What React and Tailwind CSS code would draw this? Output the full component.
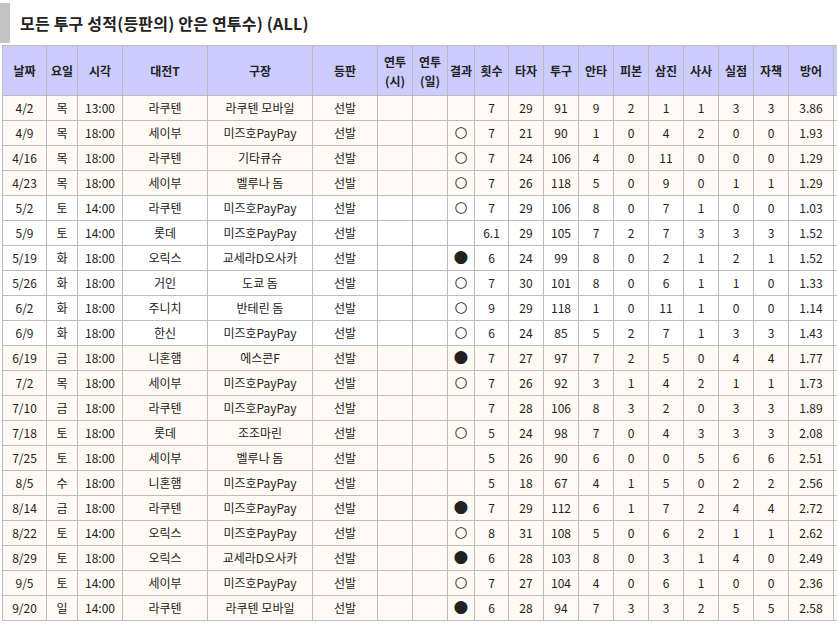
import React from "react";

const cols = [
  { key: "date", label: "날짜", w: 44 },
  { key: "dow", label: "요일", w: 31 },
  { key: "time", label: "시각", w: 45 },
  { key: "opp", label: "대전T", w: 85 },
  { key: "park", label: "구장", w: 105 },
  { key: "role", label: "등판", w: 65 },
  { key: "r1", label: ["연투", "(시)"], w: 35 },
  { key: "r2", label: ["연투", "(일)"], w: 35 },
  { key: "res", label: "결과", w: 27 },
  { key: "ip", label: "횟수", w: 34 },
  { key: "bf", label: "타자", w: 35 },
  { key: "np", label: "투구", w: 35 },
  { key: "h", label: "안타", w: 35 },
  { key: "hr", label: "피본", w: 35 },
  { key: "so", label: "삼진", w: 35 },
  { key: "bb", label: "사사", w: 35 },
  { key: "r", label: "실점", w: 35 },
  { key: "er", label: "자책", w: 35 },
  { key: "era", label: "방어", w: 45 },
  { key: "more", label: "", w: 50 },
];

const raw = [
  "4/2|목|13:00|라쿠텐|라쿠텐 모바일|선발||||7|29|91|9|2|1|1|3|3|3.86|",
  "4/9|목|18:00|세이부|미즈호PayPay|선발|||○|7|21|90|1|0|4|2|0|0|1.93|",
  "4/16|목|18:00|라쿠텐|기타큐슈|선발|||○|7|24|106|4|0|11|0|0|0|1.29|",
  "4/23|목|18:00|세이부|벨루나 돔|선발|||○|7|26|118|5|0|9|0|1|1|1.29|",
  "5/2|토|14:00|라쿠텐|미즈호PayPay|선발|||○|7|29|106|8|0|7|1|0|0|1.03|",
  "5/9|토|14:00|롯데|미즈호PayPay|선발||||6.1|29|105|7|2|7|3|3|3|1.52|",
  "5/19|화|18:00|오릭스|교세라D오사카|선발|||●|6|24|99|8|0|2|1|2|1|1.52|",
  "5/26|화|18:00|거인|도쿄 돔|선발|||○|7|30|101|8|0|6|1|1|0|1.33|",
  "6/2|화|18:00|주니치|반테린 돔|선발|||○|9|29|118|1|0|11|1|0|0|1.14|",
  "6/9|화|18:00|한신|미즈호PayPay|선발|||○|6|24|85|5|2|7|1|3|3|1.43|",
  "6/19|금|18:00|니혼햄|에스콘F|선발|||●|7|27|97|7|2|5|0|4|4|1.77|",
  "7/2|목|18:00|세이부|미즈호PayPay|선발|||○|7|26|92|3|1|4|2|1|1|1.73|",
  "7/10|금|18:00|라쿠텐|미즈호PayPay|선발||||7|28|106|8|3|2|0|3|3|1.89|",
  "7/18|토|18:00|롯데|조조마린|선발|||○|5|24|98|7|0|4|3|3|3|2.08|",
  "7/25|토|18:00|세이부|벨루나 돔|선발||||5|26|90|6|0|0|5|6|6|2.51|",
  "8/5|수|18:00|니혼햄|미즈호PayPay|선발||||5|18|67|4|1|5|0|2|2|2.56|",
  "8/14|금|18:00|라쿠텐|미즈호PayPay|선발|||●|7|29|112|6|1|7|2|4|4|2.72|",
  "8/22|토|14:00|오릭스|미즈호PayPay|선발|||○|8|31|108|5|0|6|2|1|1|2.62|",
  "8/29|토|18:00|오릭스|교세라D오사카|선발|||●|6|28|103|8|0|3|1|4|0|2.49|",
  "9/5|토|14:00|세이부|미즈호PayPay|선발|||○|7|27|104|4|0|6|1|0|0|2.36|",
  "9/20|일|14:00|라쿠텐|라쿠텐 모바일|선발|||●|6|28|94|7|3|3|2|5|5|2.58|",
];

const rows = raw.map((s) => s.split("|"));

// May rows and early June show white, the rest cream
const whiteRows = new Set([4, 5, 6, 7, 8, 9]);

function Mark({ v }) {
  if (!v) return null;
  return (
    <span
      className={`relative inline-block leading-none ${
        v === "●" ? "text-[17px] top-[-1px]" : "text-[15px] top-[-1px]"
      }`}
      style={{ fontFamily: '"DejaVu Sans", sans-serif' }}
    >
      {v}
    </span>
  );
}

export default function App() {
  return (
    <div
      className="w-[837px] h-[626px] overflow-hidden bg-white text-[#222]"
      style={{ fontFamily: '"Noto Sans CJK KR", "Noto Sans", sans-serif' }}
    >
      {/* Title */}
      <div className="flex items-stretch pt-[3px] h-[45px]">
        <div className="w-[10px] h-[40px] bg-[#c4c4c4]" />
        <h2 className="h-[40px] flex items-center pl-[10px] text-[16px] font-bold tracking-[0.2px]">
          모든 투구 성적(등판의) 안은 연투수) (ALL)
        </h2>
      </div>

      {/* Table */}
      <table className="ml-[2px] w-[881px] table-fixed border-collapse text-[12px]">
        <colgroup>
          {cols.map((c) => (
            <col key={c.key} style={{ width: c.w }} />
          ))}
        </colgroup>
        <thead>
          <tr className="h-[50px] bg-[#ccccff]">
            {cols.map((c) => (
              <th
                key={c.key}
                className="border border-[#bcbcbc] p-0 text-center font-bold leading-[19px] text-[12px] whitespace-nowrap"
              >
                {Array.isArray(c.label) ? (
                  <>
                    {c.label[0]}
                    <br />
                    {c.label[1]}
                  </>
                ) : (
                  c.label
                )}
              </th>
            ))}
          </tr>
        </thead>
        <tbody>
          {rows.map((r, i) => (
            <tr
              key={i}
              className={`h-[25px] ${whiteRows.has(i) ? "bg-white" : "bg-[#fffaf3]"}`}
            >
              {r.map((v, j) => (
                <td
                  key={j}
                  className="border border-[#bcbcbc] p-0 text-center whitespace-nowrap"
                >
                  {j === 8 ? <Mark v={v} /> : v}
                </td>
              ))}
            </tr>
          ))}
        </tbody>
      </table>
    </div>
  );
}
